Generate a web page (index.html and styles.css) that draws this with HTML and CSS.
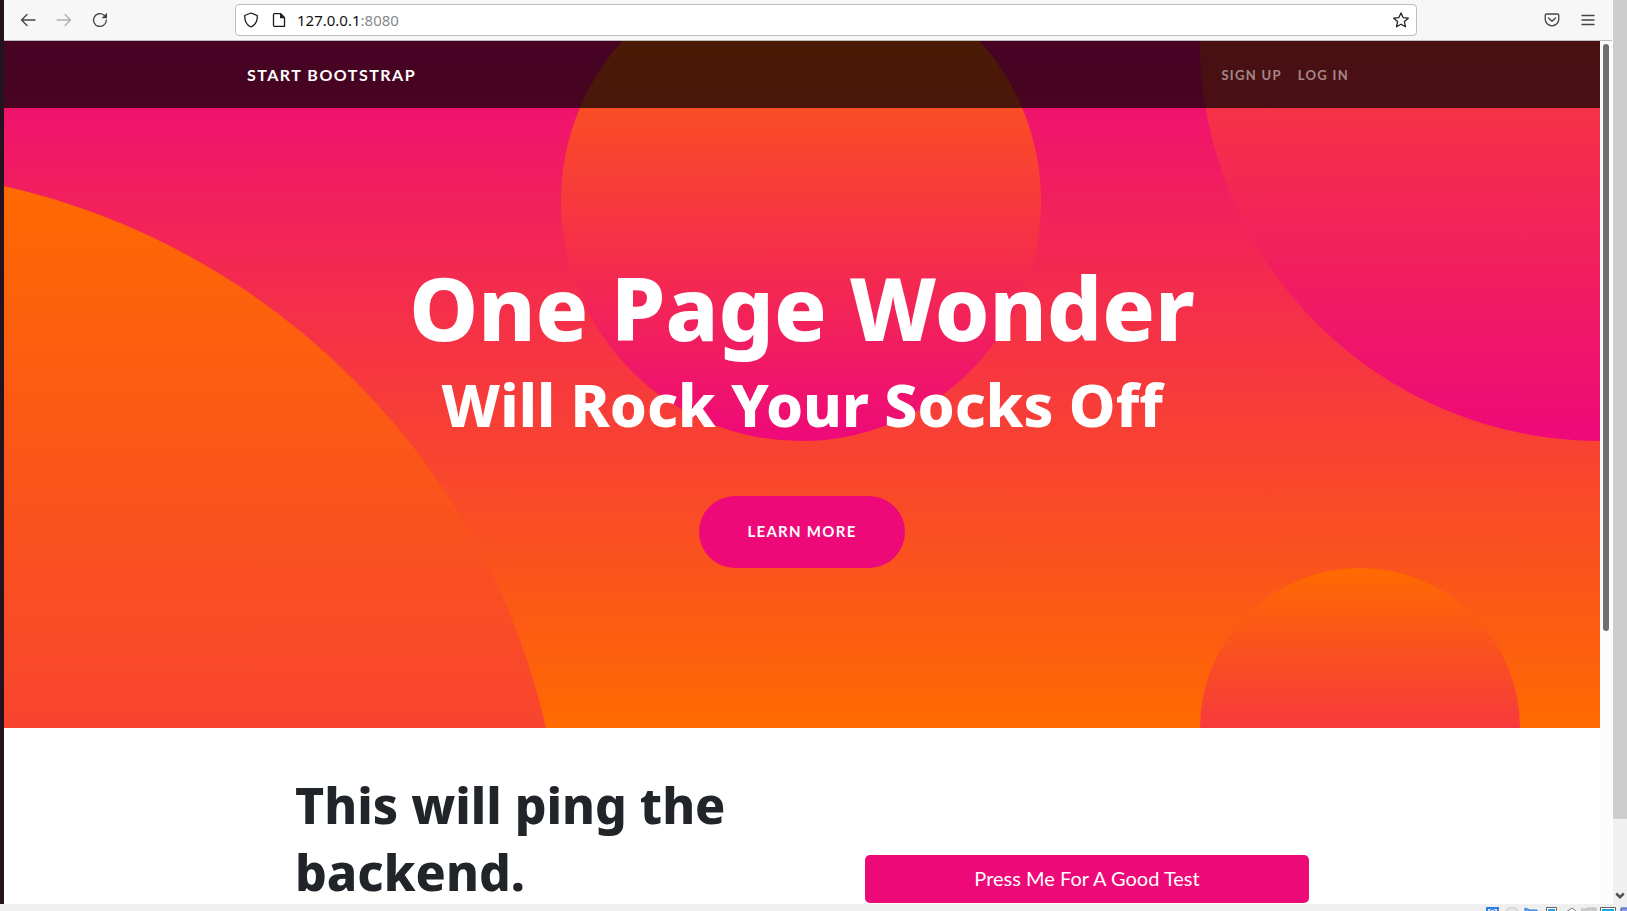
FILE: index.html
```html
<!DOCTYPE html>
<html lang="en">
<head>
<meta charset="utf-8">
<title>One Page Wonder</title>
<link rel="stylesheet" href="styles.css">
</head>
<body>
<div class="machine">
  <div class="desktop">
    <div class="browser">
      <div class="toolbar">
        <div class="nav-buttons">
          <button class="icon-button" type="button" aria-label="Back">
            <svg viewBox="0 0 16 16"><path d="M7 2.500 1.500 8 7 13.500M1.500 8h13.500"/></svg>
          </button>
          <button class="icon-button" type="button" aria-label="Forward" disabled>
            <svg viewBox="0 0 16 16"><path d="M9 2.500 14.500 8 9 13.500M14.500 8H1"/></svg>
          </button>
          <button class="icon-button" type="button" aria-label="Reload">
            <svg viewBox="0 0 16 16"><path d="M14.300 8a6.400 6.400 0 1 1-2.200-4.800l1 1"/><path class="solid" d="M15 .8v5.400H9.600z"/></svg>
          </button>
        </div>
        <div class="address">
          <svg class="glyph" viewBox="0 0 16 16"><path d="M8 1 14.300 3.500C14.500 9 12.500 13 8 15 3.500 13 1.500 9 1.700 3.500z"/></svg>
          <svg class="glyph" viewBox="0 0 16 16"><path d="M3.500 1.700h6.300l3.700 3.700v8.900h-10a1 1 0 0 1-1-1V2.700a1 1 0 0 1 1-1z"/><path class="solid" d="M9 1.500v4.800h5z"/></svg>
          <p class="url"><span class="url-host">127.0.0.1</span>:8080</p>
          <button class="icon-button star" type="button" aria-label="Bookmark this page">
            <svg viewBox="0 0 16 16"><path d="m8 .9 2.100 4.700 5.200.6-3.900 3.400 1.100 5.200L8 12.200l-4.500 2.600 1.100-5.200L.7 6.200l5.200-.6z"/></svg>
          </button>
        </div>
        <div class="tool-buttons">
          <button class="icon-button" type="button" aria-label="Save to Pocket">
            <svg viewBox="0 0 16 16"><path d="M2.500 2h11a1.300 1.300 0 0 1 1.300 1.300V7A6.800 6.800 0 0 1 1.200 7V3.300A1.300 1.300 0 0 1 2.500 2zM4.500 6 8 9.300 11.500 6"/></svg>
          </button>
          <button class="icon-button" type="button" aria-label="Open menu">
            <svg viewBox="0 0 16 16"><path d="M2 3.500h12M2 8h12M2 12.500h12"/></svg>
          </button>
        </div>
      </div>
      <div class="viewport">
        <div class="page">
          <header class="masthead">
            <div class="circle circle-1"></div>
            <div class="circle circle-2"></div>
            <div class="circle circle-3"></div>
            <div class="circle circle-4"></div>
            <nav class="navbar">
              <div class="container navbar-inner">
                <a class="brand" href="#">Start Bootstrap</a>
                <div class="nav-links">
                  <a class="nav-link" href="#">Sign Up</a>
                  <a class="nav-link" href="#">Log In</a>
                </div>
              </div>
            </nav>
            <div class="masthead-content">
              <h1 class="masthead-heading">One Page Wonder</h1>
              <h2 class="masthead-subheading">Will Rock Your Socks Off</h2>
              <a class="button-xl" href="#backend">Learn More</a>
            </div>
          </header>
          <section class="container row" id="backend">
            <div class="column"><h2 class="section-heading">This will ping the backend.</h2></div>
            <div class="column"><button class="button-block" type="button">Press Me For A Good Test</button></div>
          </section>
        </div>
        <div class="page-scroll"><div class="page-thumb"></div></div>
      </div>
    </div>
    <div class="outer-scroll">
      <div class="outer-thumb"></div>
      <svg class="outer-arrow" viewBox="0 0 8 8"><path d="M1 2l3 3 3-3"/></svg>
    </div>
  </div>
  <div class="statusbar">
    <svg viewBox="0 0 16 4"><path d="M1 5V1h11v4" fill="#d4e6fa" stroke="#2a7de1" stroke-width="2"/><path d="M4 4a2.500 1.500 0 0 1 5 0" stroke="#2a7de1"/></svg>
    <svg viewBox="0 0 16 4"><path d="M1 5a6 5 0 0 1 12 0" fill="#e4e4e4" stroke="#c4c4c4"/></svg>
    <svg viewBox="0 0 16 4"><path d="M1 5V1l5 2h7v2" fill="#6da9ec" stroke="#2a7de1"/></svg>
    <svg viewBox="0 0 16 4"><path d="M3.500 5V.5h10V5" fill="#fff" stroke="#666"/><path d="M5 2h7v3H5z" fill="#22a2e8"/></svg>
    <svg viewBox="0 0 16 4"><path d="m4 5 6-4 5 4" fill="#fff" stroke="#777"/></svg>
    <svg viewBox="0 0 16 4"><path d="M0 5V2h5l2-1h8v4z" fill="#ccc" stroke="#bbb"/></svg>
    <svg viewBox="0 0 16 4"><path d="M.5 5V.5h15V5" fill="#fff" stroke="#666"/><path d="M2 2h12v3H2z" fill="#22a2e8"/></svg>
    <svg class="status-last" viewBox="0 0 8 4"><path d="M2 5V1h7v4" fill="#8a9cdf" stroke="#3a50b8"/></svg>
  </div>
</div>
</body>
</html>
```
FILE: styles.css
```css
*, *::before, *::after { box-sizing: border-box; }
body { margin: 0; background: #efefef; font-family: Lato, sans-serif; font-size: 16px; line-height: 24px; color: #212529; }
h1, h2, p { margin: 0; }
a { text-decoration: none; }
button { font-family: inherit; border: 0; cursor: pointer; }
svg { display: block; fill: none; }

.machine { display: flex; flex-direction: column; height: 100vh; overflow: hidden; }
.desktop { flex: 1; min-height: 0; display: flex; }
.browser { flex: 1; min-width: 0; display: flex; flex-direction: column; border-left: 4px solid #24121f; border-right: 1px solid #fff; background: #fff; }

.toolbar { display: flex; align-items: center; height: 41px; flex: none; padding: 0 16px; background: #f7f7f7; border-bottom: 1px solid #bdbdbd; }
.nav-buttons, .tool-buttons { display: flex; gap: 20px; }
.nav-buttons { flex: 0 0 215px; }
.tool-buttons { flex: 0 0 179px; justify-content: flex-end; }
.icon-button { width: 16px; height: 16px; padding: 0; background: none; color: #444; }
.icon-button:disabled { color: #b0b0b0; }
.icon-button svg, .glyph { width: 16px; height: 16px; stroke: currentColor; stroke-width: 1.3; stroke-linejoin: round; stroke-linecap: round; }
.solid { fill: currentColor; stroke: none; }
.address { flex: 1; display: flex; align-items: center; gap: 12px; height: 32px; padding: 0 7px; border: 1px solid #bdbdbd; border-radius: 4px; background: #fff; color: #1c1c1c; }
.url { flex: 1; margin-left: -2px; font: 15px/20px "Noto Sans", sans-serif; color: #888; }
.url-host { color: #111; }
.star { color: #222; }

.viewport { flex: 1; min-height: 0; display: flex; overflow: hidden; }
.page { flex: 1; min-width: 0; overflow: hidden; }
.page-scroll { width: 12px; padding: 3px; background: #fcfcfc; }
.page-thumb { height: 68.5%; border-radius: 3px; background: #6e706f; }
.container { width: 100%; max-width: 1140px; margin: 0 auto; }

.masthead { position: relative; overflow: hidden; background: linear-gradient(0deg, #ff6a00 0%, #ee0979 100%); color: #fff; text-align: center; }
.circle { position: absolute; border-radius: 50%; background: linear-gradient(0deg, #ee0979 0%, #ff6a00 100%); }
.circle-1 { width: 1440px; height: 1440px; bottom: -880px; left: -880px; }
.circle-2 { width: 800px; height: 800px; top: -400px; right: -400px; }
.circle-3 { width: 320px; height: 320px; bottom: -160px; right: 5%; }
.circle-4 { width: 480px; height: 480px; top: -80px; right: 35%; }
.navbar { position: relative; padding: 21px 0; background: rgba(0, 0, 0, .7); }
.navbar-inner { display: flex; align-items: center; justify-content: space-between; padding: 0 15px; }
.brand { font-weight: 700; line-height: 25px; letter-spacing: 1.5px; text-transform: uppercase; color: #fff; }
.nav-links { display: flex; gap: 16px; padding-right: 8px; }
.nav-link { font-size: 13px; font-weight: 700; letter-spacing: 1.3px; text-transform: uppercase; color: rgba(255, 255, 255, .5); }
.masthead-heading, .masthead-subheading, .section-heading { font-family: "Noto Sans", sans-serif; font-weight: 800; }
.masthead-content { position: relative; padding: 142px 15px 160px; }
.masthead-heading { font-size: 87px; line-height: 115px; }
.masthead-subheading { font-size: 59px; line-height: 79px; }
.button-xl { display: inline-block; margin-top: 52px; padding: 23px 48px 25px; border-radius: 36px; background: #ee0979; color: #fff; font-size: 15px; font-weight: 700; letter-spacing: 1.3px; text-transform: uppercase; vertical-align: top; }

.row { display: flex; align-items: center; }
.column { flex: 1; min-width: 0; padding: 48px 63px; }
.column:first-child { padding: 44px 63px 124px; }
.section-heading { font-size: 50px; line-height: 67px; }
.button-block { display: block; width: 100%; padding: 8px 16px 10px; border-radius: 5px; background: #ee0979; color: #fff; font-size: 20px; line-height: 30px; }

.outer-scroll { display: flex; flex-direction: column; flex: 0 0 14px; align-items: center; background: #f0f0f0; }
.outer-thumb { width: 100%; height: 90.600%; background: #cdcdcd; }
.outer-arrow { width: 10px; height: 10px; margin: auto 0 3px; stroke: #505050; stroke-width: 2; }
.statusbar { display: flex; justify-content: flex-end; align-items: flex-end; gap: 3px; height: 7px; flex: none; background: #efefef; }
.statusbar svg { width: 16px; height: 4px; }
.statusbar .status-last { width: 8px; }
```
